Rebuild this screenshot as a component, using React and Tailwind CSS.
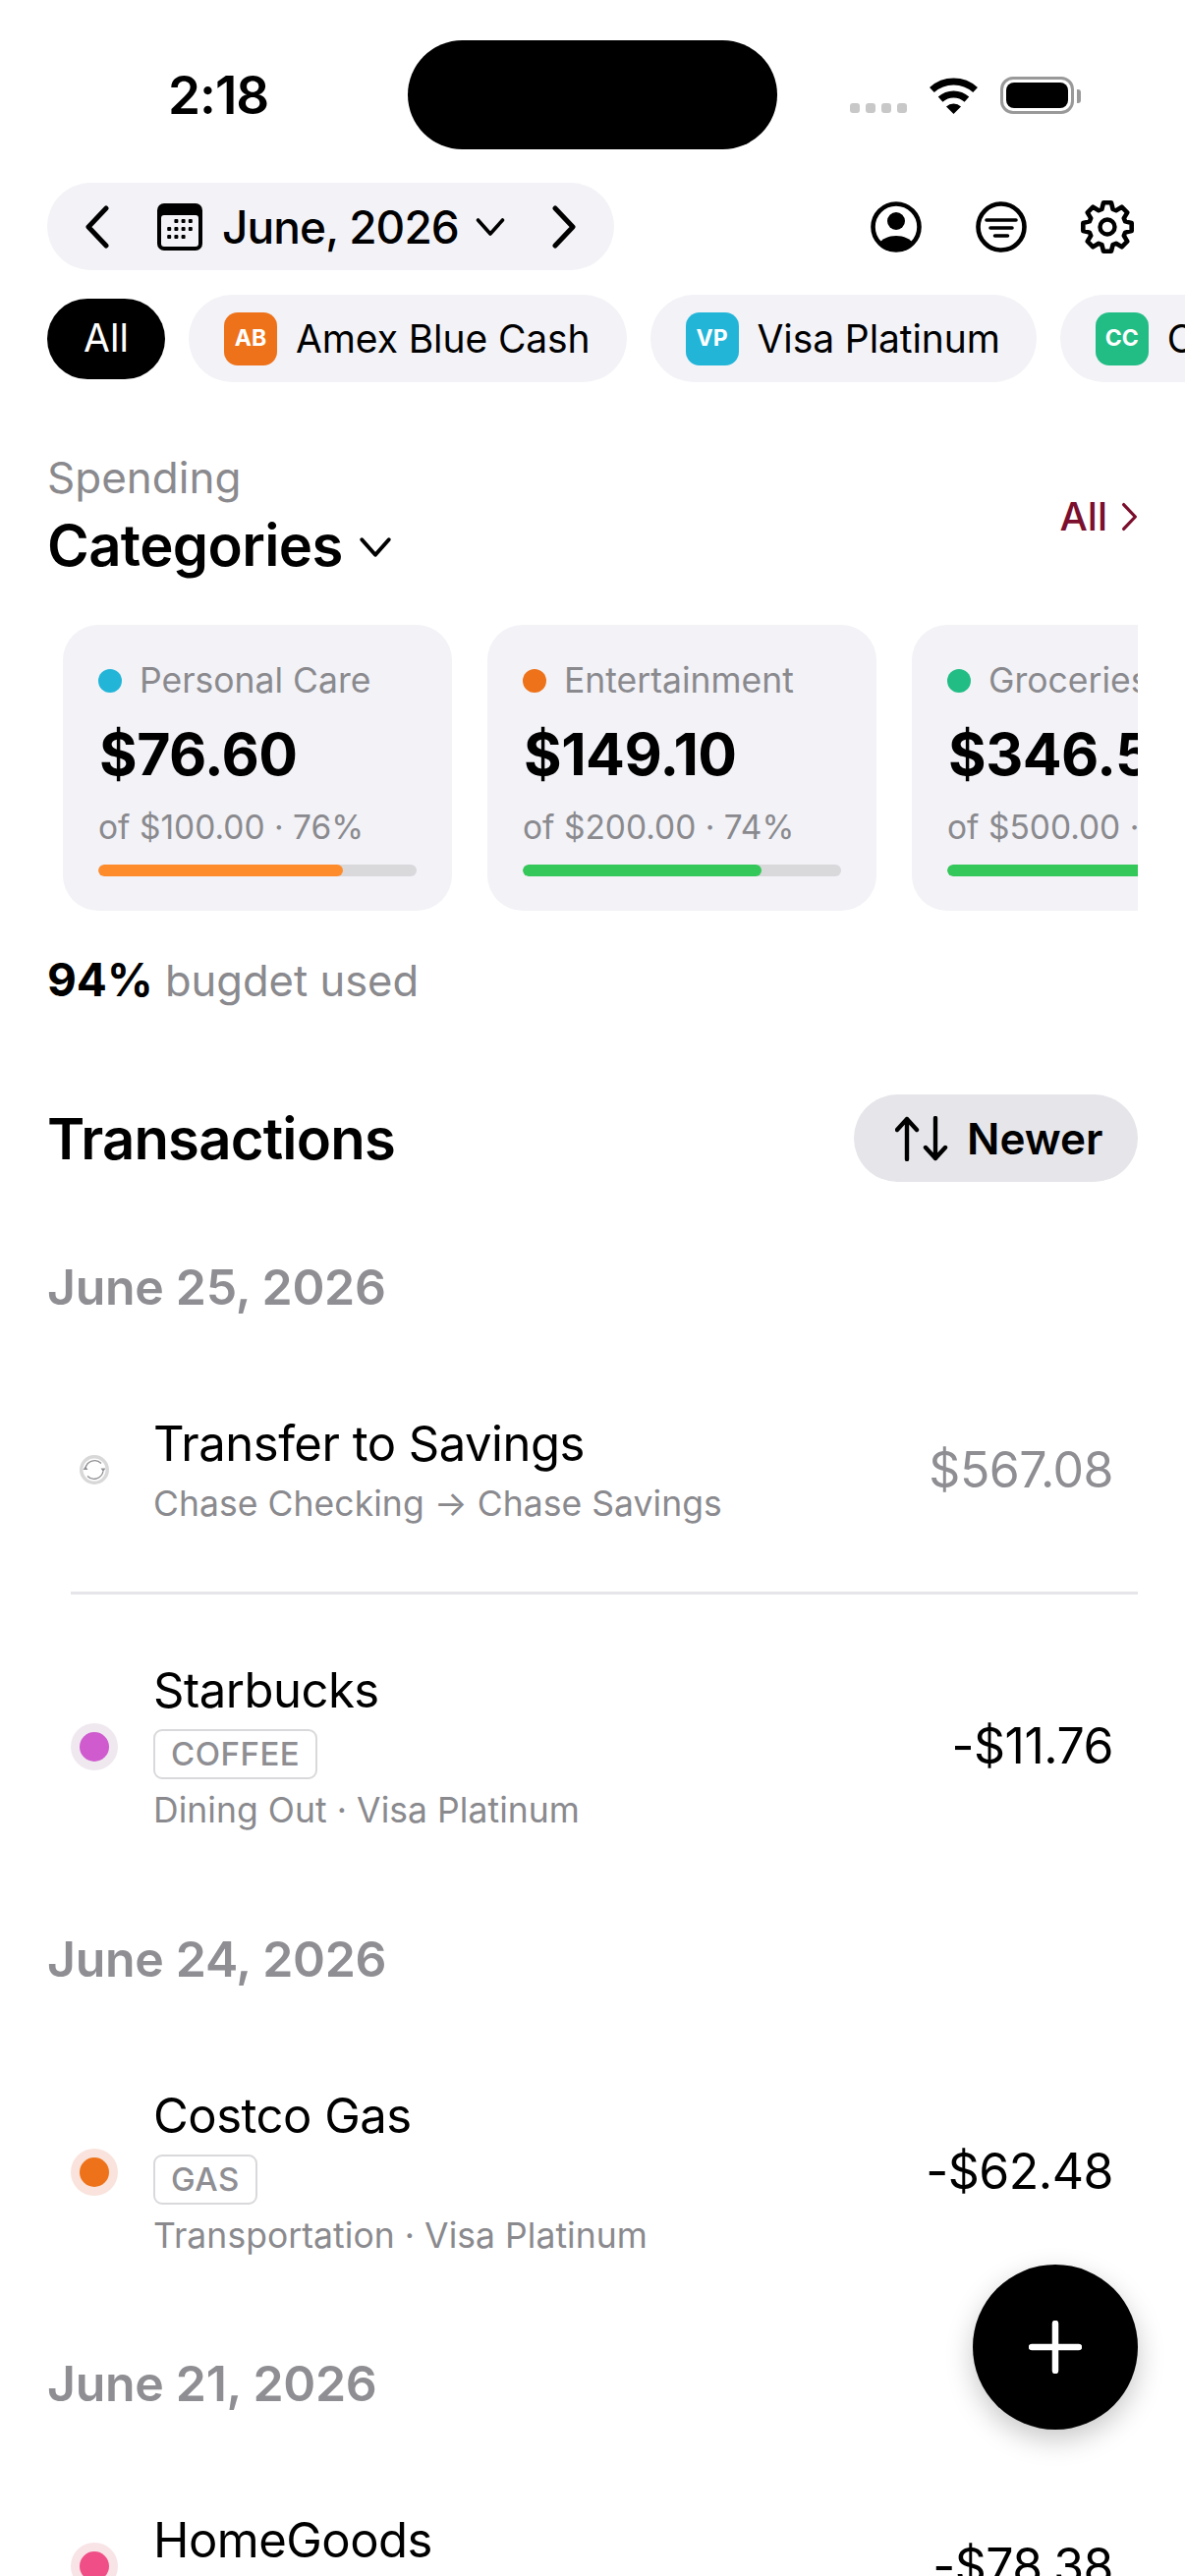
import React from "react";

const cards = [
  { dot: "bg-[#22b5d8]", label: "Personal Care", amount: "$76.60", sub: "of $100.00 · 76%", fill: "bg-[#ff8c2b]", pct: 77 },
  { dot: "bg-[#ee7219]", label: "Entertainment", amount: "$149.10", sub: "of $200.00 · 74%", fill: "bg-[#34c759]", pct: 75 },
  { dot: "bg-[#22bd85]", label: "Groceries", amount: "$346.50", sub: "of $500.00 · 69%", fill: "bg-[#34c759]", pct: 69 },
];

const chips = [
  { badge: "AB", color: "bg-[#ee7219]", name: "Amex Blue Cash" },
  { badge: "VP", color: "bg-[#22b5d8]", name: "Visa Platinum" },
  { badge: "CC", color: "bg-[#22bd85]", name: "Chase Checking" },
];

function gearPath() {
  // 8 teeth, corners get softened by the round stroke join
  const pts = [];
  for (let i = 0; i < 8; i++) {
    const a = (i * Math.PI) / 4 - Math.PI / 2;
    const at = (r, d) => `${(30 + r * Math.cos(a + d)).toFixed(2)} ${(30 + r * Math.sin(a + d)).toFixed(2)}`;
    pts.push(at(19, -0.3), at(25, -0.16), at(25, 0.16), at(19, 0.3));
  }
  return "M" + pts.join("L") + "Z";
}

function Chevron({ dir = "right", className }) {
  const d = dir === "right" ? "M4 3l18 19L4 41" : "M22 3L4 22l18 19";
  return (
    <svg viewBox="0 0 26 44" className={className} fill="none" stroke="currentColor" strokeWidth="5" strokeLinecap="round" strokeLinejoin="round">
      <path d={d} />
    </svg>
  );
}

function SmallDown({ className }) {
  return (
    <svg viewBox="0 0 30 20" className={className} fill="none" stroke="currentColor" strokeWidth="3.6" strokeLinecap="round" strokeLinejoin="round">
      <path d="M2.5 3L15 17 27.5 3" />
    </svg>
  );
}

function CalendarIcon() {
  const dots = [[2, 1], [3, 1], [4, 1], [1, 2], [2, 2], [3, 2], [4, 2], [1, 3], [2, 3], [3, 3]];
  return (
    <svg viewBox="0 0 46 48" className="w-[46px] h-[48px]">
      <rect width="46" height="48" rx="7" fill="#000" />
      <rect x="4" y="12" width="38" height="32" rx="3" fill="#f2f2f7" />
      {dots.map(([c, r]) => (
        <rect key={`${c}-${r}`} x={3 + c * 7.2} y={8 + r * 8} width="4" height="4" rx="1" fill="#000" />
      ))}
    </svg>
  );
}

function WifiIcon() {
  return (
    <svg viewBox="0 0 51 38" className="w-[51px] h-[38px]" fill="none">
      <path d="M3.4 13.5A33 33 0 0 1 47.6 13.5" stroke="#000" strokeWidth="7" />
      <path d="M12.1 23.1A20 20 0 0 1 38.9 23.1" stroke="#000" strokeWidth="7" />
      <path d="M25.5 38L18 30.5A11 11 0 0 1 33 30.5Z" fill="#000" />
    </svg>
  );
}

function ProfileIcon() {
  return (
    <svg viewBox="0 0 52 52" className="w-[52px] h-[52px]" fill="none">
      <circle cx="26" cy="26" r="23.5" stroke="#000" strokeWidth="4.6" />
      <circle cx="26" cy="20" r="9" fill="#000" />
      <path d="M8 43c4-5 10-8 18-8s14 3 18 8c-4 5-11 8-18 8S12 48 8 43Z" fill="#000" />
    </svg>
  );
}

function FilterIcon() {
  return (
    <svg viewBox="0 0 52 52" className="w-[52px] h-[52px]" fill="none" stroke="#000" strokeLinecap="round">
      <circle cx="26" cy="26" r="23.5" strokeWidth="4.6" />
      <path d="M11 19h30M15 27h22M19.500 35h13" strokeWidth="3.6" />
    </svg>
  );
}

function GearIcon() {
  return (
    <svg viewBox="0 0 60 60" className="w-[60px] h-[60px]" fill="none" stroke="#000" strokeLinejoin="round">
      <path d={gearPath()} strokeWidth="4.6" />
      <circle cx="30" cy="30" r="7.500" strokeWidth="4.4" />
    </svg>
  );
}

function SortIcon() {
  return (
    <svg viewBox="0 0 54 46" className="w-[54px] h-[46px]" fill="none" stroke="#000" strokeWidth="4.4" strokeLinecap="round" strokeLinejoin="round">
      <path d="M12 44V3M2 14L12 3l10 11M41 2v41M31 32l10 11 10-11" />
    </svg>
  );
}

function TransferDot() {
  return (
    <svg viewBox="0 0 30 30" className="w-[30px] h-[30px]" fill="none">
      <circle cx="15" cy="15" r="15" fill="#d8d8d8" />
      <circle cx="15" cy="15" r="11.500" fill="#fff" />
      <path d="M6 13.500A9.500 9.500 0 0 1 22 8.500M24 16.500A9.500 9.500 0 0 1 8 21.500" stroke="#8e8e93" strokeWidth="1.300" />
      <path d="M3.500 15L6 11.500 8.500 15ZM21.500 13.500L24 17l2.500-3.500Z" fill="#8e8e93" />
    </svg>
  );
}

function Row({ title, tag, sub, amount, muted, dot, halo, divider }) {
  return (
    <div>
      <div className="flex items-center ml-[72px] mr-[73px] py-[68px]">
        <div className="w-[48px] h-[48px] shrink-0 flex items-center justify-center">
          {dot ? (
            <div className={`w-[48px] h-[48px] rounded-full flex items-center justify-center ${halo}`}>
              <div className={`w-[30px] h-[30px] rounded-full ${dot}`} />
            </div>
          ) : (
            <TransferDot />
          )}
        </div>
        <div className="ml-[36px] flex-1 min-w-0">
          <div className="h-[60px] leading-[60px] text-[49px] tracking-[-0.5px] text-black">{title}</div>
          {tag && (
            <div className="mt-[9px] w-fit h-[51px] px-[16px] border-[2.5px] border-[#d9d9dc] rounded-[9px] flex items-center text-[33px] font-medium tracking-[0.5px] text-[#8e8e93]">
              {tag}
            </div>
          )}
          <div className={`${tag ? "mt-[11px]" : "mt-[10px]"} h-[42px] leading-[42px] text-[35.5px] tracking-[0.05px] text-[#8a8a8e] whitespace-nowrap`}>{sub}</div>
        </div>
        <div className={`text-[50px] tracking-[-0.5px] ${muted ? "text-[#8e8e93]" : "text-black"}`}>{amount}</div>
      </div>
      {divider && <div className="ml-[72px] mr-[48px] h-[3px] bg-[#e5e5ea]" />}
    </div>
  );
}

function DateHeading({ children }) {
  return <div className="mx-[48px] h-[60px] leading-[60px] mb-[32px] text-[50px] font-semibold tracking-[-0.3px] text-[#8e8e93]">{children}</div>;
}

export default function App() {
  return (
    <div className="relative w-[1206px] h-[2622px] overflow-hidden bg-white text-black font-['Inter','Liberation_Sans',sans-serif]">
      {/* status bar */}
      <div className="h-[186px] pt-[41px] flex items-start">
        <div className="w-[415px] h-[111px] pl-[171px] pt-[3px] flex items-center text-[53px] font-semibold tracking-[-1px]">2:18</div>
        <div className="w-[376px] h-[111px] rounded-[56px] bg-black" />
        <div className="flex items-end ml-[74px] mt-[37px]">
          <div className="flex gap-[6px] mb-[1px]">
            {[0, 1, 2, 3].map((i) => (
              <div key={i} className="w-[10px] h-[10px] rounded-[3px] bg-[#c8c8c8]" />
            ))}
          </div>
          <div className="ml-[22px]"><WifiIcon /></div>
          <div className="ml-[22px] w-[75px] h-[38px] border-[3px] border-[#999] rounded-[13px] p-[3px]">
            <div className="w-full h-full rounded-[8px] bg-black" />
          </div>
          <div className="ml-[3px] mb-[11px] w-[4px] h-[14px] rounded-r-[3px] bg-[#999]" />
        </div>
      </div>

      {/* month row */}
      <div className="flex items-center justify-between pl-[48px] pr-[48px]">
        <div className="w-[577px] h-[89px] rounded-full bg-[#f2f2f7] flex items-center pl-[38px]">
          <Chevron dir="left" className="w-[26px] h-[44px]" />
          <div className="ml-[48px]"><CalendarIcon /></div>
          <div className="ml-[20px] text-[46px] font-medium leading-none tracking-[-0.9px] w-[240px] whitespace-nowrap">June, 2026</div>
          <SmallDown className="ml-[18px] w-[30px] h-[20px]" />
          <Chevron dir="right" className="ml-[47px] w-[26px] h-[44px]" />
        </div>
        <div className="flex items-center">
          <ProfileIcon />
          <div className="ml-[55px]"><FilterIcon /></div>
          <div className="ml-[52px] mr-[1px]"><GearIcon /></div>
        </div>
      </div>

      {/* account chips */}
      <div className="mt-[25px] h-[89px] flex items-center gap-[24px] pl-[48px] overflow-hidden">
        <div className="w-[120px] h-[82px] shrink-0 rounded-full bg-black text-white flex items-center justify-center text-[39px] font-normal">All</div>
        {chips.map((c) => (
          <div key={c.badge} className="h-[89px] shrink-0 rounded-full bg-[#f2f2f7] flex items-center pl-[36px] pr-[37px]">
            <div className={`w-[54px] h-[54px] rounded-[14px] ${c.color} text-white flex items-center justify-center text-[23px] font-bold`}>{c.badge}</div>
            <div className="ml-[19px] text-[39px] font-normal tracking-[-0.1px] leading-none whitespace-nowrap">{c.name}</div>
          </div>
        ))}
      </div>

      {/* spending header */}
      <div className="mt-[71px] mx-[48px] flex items-center justify-between">
        <div>
          <div className="h-[52px] leading-[52px] text-[44px] text-[#8a8a8e]">Spending</div>
          <div className="flex items-center mt-[7px] h-[72px]">
            <span className="text-[58px] font-semibold tracking-[-0.6px] leading-none">Categories</span>
            <SmallDown className="ml-[16px] w-[34px] h-[22px] mt-[4px]" />
          </div>
        </div>
        <div className="flex items-center text-[#7b0f2d] text-[40px] font-medium">
          All
          <Chevron dir="right" className="ml-[14px] w-[17px] h-[30px]" />
        </div>
      </div>

      {/* category cards */}
      <div className="mt-[45px] ml-[48px] w-[1110px] overflow-hidden flex gap-[36px] pl-[16px]">
        {cards.map((c) => (
          <div key={c.label} className="w-[396px] h-[291px] shrink-0 rounded-[36px] bg-[#f2f2f7] pt-[36px] px-[36px]">
            <div className="flex items-center h-[42px]">
              <div className={`w-[24px] h-[24px] rounded-full ${c.dot}`} />
              <div className="ml-[18px] text-[35.5px] text-[#8a8a8e] whitespace-nowrap">{c.label}</div>
            </div>
            <div className="mt-[22px] ml-[1px] h-[64px] leading-[64px] text-[59px] font-bold tracking-[-0.5px] whitespace-nowrap">{c.amount}</div>
            <div className="mt-[21px] h-[42px] leading-[42px] text-[33.5px] text-[#8a8a8e] whitespace-nowrap">{c.sub}</div>
            <div className="mt-[17px] h-[12px] rounded-full bg-[#d9d9dc] overflow-hidden">
              <div className={`h-full rounded-full ${c.fill}`} style={{ width: `${c.pct}%` }} />
            </div>
          </div>
        ))}
      </div>

      <div className="mt-[43px] mx-[48px] h-[54px] leading-[54px] text-[43.5px] text-[#8a8a8e]">
        <span className="font-bold text-black text-[46px]">94%</span> bugdet used
      </div>

      {/* transactions */}
      <div className="mt-[90px] mx-[48px] flex items-center justify-between">
        <div className="text-[58px] font-semibold tracking-[-0.8px] leading-none">Transactions</div>
        <div className="w-[289px] h-[89px] rounded-full bg-[#e5e5ea] flex items-center pl-[42px]">
          <SortIcon />
          <span className="ml-[19px] text-[44px] font-semibold leading-none">Newer</span>
        </div>
      </div>

      <div className="mt-[77px]">
        <DateHeading>June 25, 2026</DateHeading>
        <Row title="Transfer to Savings" sub="Chase Checking → Chase Savings" amount="$567.08" muted divider />
        <Row title="Starbucks" tag="COFFEE" sub="Dining Out · Visa Platinum" amount="-$11.76" dot="bg-[#cf5bcf]" halo="bg-[#efe9ef]" />
      </div>
      <div className="mt-[32px]">
        <DateHeading>June 24, 2026</DateHeading>
        <Row title="Costco Gas" tag="GAS" sub="Transportation · Visa Platinum" amount="-$62.48" dot="bg-[#ee7219]" halo="bg-[#f9e3dc]" />
      </div>
      <div className="mt-[31px]">
        <DateHeading>June 21, 2026</DateHeading>
        <Row title="HomeGoods" sub="Shopping · Visa Platinum" amount="-$78.38" dot="bg-[#ef4f86]" halo="bg-[#f8e3e7]" />
      </div>

      {/* add button */}
      <div className="absolute right-[48px] top-[2305px] w-[168px] h-[168px] rounded-full bg-black shadow-[0_10px_28px_rgba(0,0,0,0.22)] flex items-center justify-center">
        <svg viewBox="0 0 54 54" className="w-[54px] h-[54px]" fill="none" stroke="#fff" strokeWidth="6.500" strokeLinecap="round">
          <path d="M27 3v48M3 27h48" />
        </svg>
      </div>
    </div>
  );
}
